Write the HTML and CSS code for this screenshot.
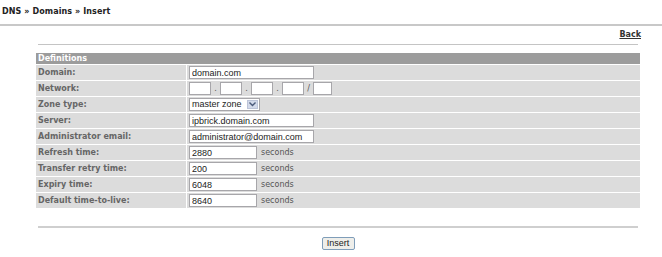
FILE: index.html
```html
<!DOCTYPE html>
<html lang="en">
<head>
    <meta charset="UTF-8">
    <title>DNS » Domains » Insert</title>
    <link rel="stylesheet" href="styles.css">
</head>
<body>
    <div class="crumb">DNS &raquo; Domains &raquo; Insert</div>
    <div class="rule-top"></div>

    <div class="content">
        <div class="back-row"><a href="#">Back</a></div>
        <div class="rule"></div>

        <table class="form">
            <tr><th colspan="2">Definitions</th></tr>
            <tr>
                <td class="label">Domain:</td>
                <td><input type="text" class="w-long" value="domain.com"></td>
            </tr>
            <tr>
                <td class="label">Network:</td>
                <td class="network">
                    <input type="text" class="w-oct"><span class="sep">.</span><input type="text" class="w-oct"><span class="sep">.</span><input type="text" class="w-oct"><span class="sep">.</span><input type="text" class="w-oct"><span class="sep slash">/</span><input type="text" class="w-mask">
                </td>
            </tr>
            <tr>
                <td class="label">Zone type:</td>
                <td>
                    <span class="select">
                        <span class="select-text">master zone</span>
                        <span class="select-btn">
                            <svg width="7" height="5" viewBox="0 0 7 5"><path d="M0.5 0.5 L3.5 3.5 L6.5 0.5" fill="none" stroke="#4a5a7a" stroke-width="1.4"/></svg>
                        </span>
                    </span>
                </td>
            </tr>
            <tr>
                <td class="label">Server:</td>
                <td><input type="text" class="w-long" value="ipbrick.domain.com"></td>
            </tr>
            <tr>
                <td class="label">Administrator email:</td>
                <td><input type="text" class="w-long" value="administrator@domain.com"></td>
            </tr>
            <tr>
                <td class="label">Refresh time:</td>
                <td><input type="text" class="w-num" value="2880"><span class="unit">seconds</span></td>
            </tr>
            <tr>
                <td class="label">Transfer retry time:</td>
                <td><input type="text" class="w-num" value="200"><span class="unit">seconds</span></td>
            </tr>
            <tr>
                <td class="label">Expiry time:</td>
                <td><input type="text" class="w-num" value="6048"><span class="unit">seconds</span></td>
            </tr>
            <tr>
                <td class="label">Default time-to-live:</td>
                <td><input type="text" class="w-num" value="8640"><span class="unit">seconds</span></td>
            </tr>
        </table>

        <div class="rule rule-bottom"></div>
        <div class="actions"><button>Insert</button></div>
    </div>
</body>
</html>
```

FILE: styles.css
```css
body {
    margin: 0;
    font-family: "DejaVu Sans", Verdana, sans-serif;
    font-size: 8px;
    color: #333;
    background: #fff;
}
.crumb {
    height: 24px;
    line-height: 12px;
    padding-left: 2px;
    padding-top: 6px;
    box-sizing: border-box;
    font-weight: bold;
    color: #222;
    letter-spacing: 0.1px;
}
.rule-top {
    height: 2px;
    background: #c8c8c8;
}
.content {
    margin-left: 35px;
    width: 606px;
}
.back-row {
    height: 18px;
    line-height: 17px;
    text-align: right;
}
.back-row a {
    color: #333;
    font-weight: bold;
    text-decoration: underline;
}
.rule {
    margin: 0 3px 0 3px;
    height: 1px;
    background: #c4c4c4;
}
.form {
    margin-top: 7px;
    width: 606px;
    border-spacing: 1px;
}
.form th {
    height: 11px;
    padding: 0 0 0 2px;
    background: #9c9c9c;
    color: #fff;
    text-align: left;
    font-weight: bold;
    line-height: 11px;
}
.form td {
    height: 15px;
    padding: 0 0 0 2px;
    background: #dcdcdc;
    vertical-align: middle;
}
.form td.label {
    width: 148px;
    font-weight: bold;
    color: #666;
}
input[type="text"] {
    box-sizing: border-box;
    height: 13px;
    margin: 0;
    padding: 0 2px;
    border: 1px solid #a7a6aa;
    background: #fff;
    font-family: "Liberation Sans", Arial, sans-serif;
    font-size: 9px;
    color: #222;
    vertical-align: middle;
}
.w-long { width: 125px; }
.w-num { width: 68px; }
.w-oct { width: 22px; }
.w-mask { width: 19px; }
.sep {
    display: inline-block;
    width: 9px;
    text-align: center;
    color: #555;
    vertical-align: middle;
}
.unit {
    margin-left: 4px;
    color: #555;
    vertical-align: middle;
}
.select {
    display: inline-flex;
    align-items: center;
    box-sizing: border-box;
    height: 13px;
    width: 71px;
    border: 1px solid #a7a6aa;
    background: #fff;
    vertical-align: middle;
}
.select-text {
    flex: 1;
    padding-left: 2px;
    font-family: "Liberation Sans", Arial, sans-serif;
    font-size: 9px;
    color: #222;
    line-height: 11px;
}
.select-btn {
    display: flex;
    align-items: center;
    justify-content: center;
    width: 11px;
    height: 9px;
    margin-right: 1px;
    background: #d3daea;
    border: 1px solid #bcc4d8;
    box-sizing: border-box;
}
.rule-bottom {
    margin-top: 17px;
    height: 2px;
    background: #cfcfcf;
}
.actions {
    margin-top: 9px;
    text-align: center;
}
.actions button {
    box-sizing: border-box;
    height: 13px;
    width: 33px;
    padding: 0;
    border: 1px solid #7f9db9;
    border-radius: 2px;
    background: #eeeeea;
    font-family: "Liberation Sans", Arial, sans-serif;
    font-size: 9px;
    color: #222;
    line-height: 11px;
}
```
